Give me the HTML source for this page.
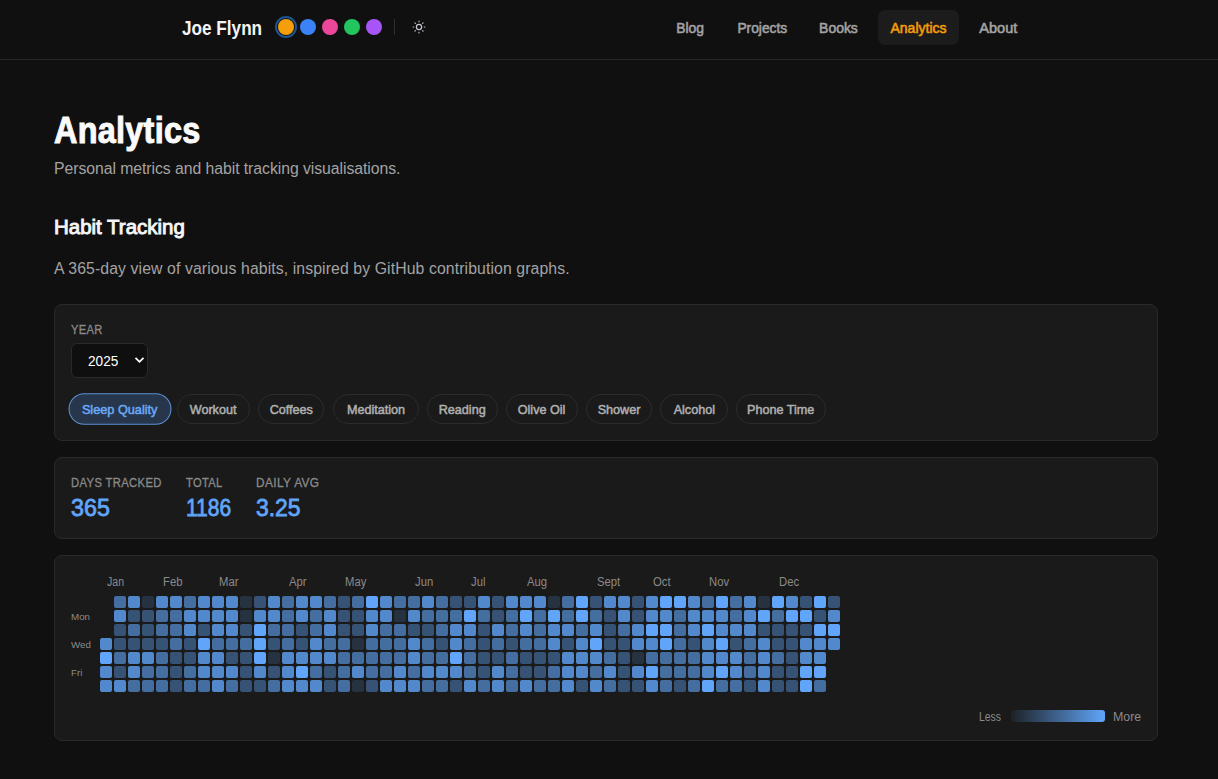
<!DOCTYPE html>
<html><head><meta charset="utf-8"><title>Analytics - Joe Flynn</title>
<style>
*{box-sizing:border-box;margin:0;padding:0}
html,body{width:1218px;height:779px;overflow:hidden;background:#101010;font-family:"Liberation Sans",sans-serif;color:#e5e5e5}
.abs{position:absolute;white-space:nowrap;line-height:1}
.sx{display:inline-block;transform-origin:0 50%}
header{position:absolute;left:0;top:0;width:1218px;height:60px;border-bottom:1px solid #28282b;background:#101010}
.logo{left:182px;top:19px;font-size:19.5px;font-weight:700;color:#f5f5f5}
.dot{position:absolute;top:19px;width:16px;height:16px;border-radius:50%}
.dot.sel{box-shadow:0 0 0 1px #111,0 0 0 3px #1c5690}
.divider{position:absolute;left:394px;top:19px;width:1px;height:16px;background:#2e2e2e}
.sun{position:absolute;left:411px;top:19px;width:16px;height:16px}
.nav{position:absolute;top:10px;height:35px;padding-top:0.5px;border-radius:7px;font-size:14px;font-weight:400;-webkit-text-stroke:0.55px currentColor;color:#a3a3a3;text-align:center;line-height:35px}
.nav.act{background:#1c1c1c;color:#f59e0b}
h1{left:54px;top:113px;font-size:36px;font-weight:700;color:#fafafa}
.sub{left:54px;top:161px;font-size:15.8px;color:#a3a3a3;letter-spacing:-0.06px}
h2{left:54px;top:216px;font-size:19.5px;font-weight:700;color:#f5f5f5}
.desc{left:54px;top:261px;font-size:15.8px;color:#a3a3a3;letter-spacing:0.1px}
.card{position:absolute;left:54px;width:1104px;background:#1a1a1a;border:1px solid #2a2a2d;border-radius:8px}
.lbl{font-size:12.5px;color:#8a8a8a;letter-spacing:0.4px;-webkit-text-stroke:0.3px currentColor;text-transform:uppercase;transform-origin:0 0}
.select{position:absolute;left:16px;top:38px;width:77px;height:35px;background:#0f0f0f;border:1px solid #2a2a2a;border-radius:6px}
.pill{position:absolute;top:89px;height:30px;border:1px solid #2c2c2c;border-radius:15px;font-size:13px;font-weight:400;-webkit-text-stroke:0.5px currentColor;color:#b0b0b0;text-align:center;line-height:30px}
.pill span{display:inline-block;transform:scaleX(0.97)}
.pill.act span{transform:scaleX(0.93)}
.pill.act{background:#27364a;border-color:#5b91d3;color:#6aaaf8;transform:scale(1.05)}
.val{font-size:24px;font-weight:400;-webkit-text-stroke:0.8px currentColor;color:#60a5fa;transform-origin:0 0}
.c{position:absolute;width:12px;height:12px;border-radius:2px}
.l1{background:#263240}.l2{background:#365274}.l3{background:#446da0}.l4{background:#5289cd}.l5{background:#60a5fa}
.mo{position:absolute;top:19.5px;font-size:12px;color:#8a8a8a;line-height:1;transform:scaleX(0.88);transform-origin:0 0}
.day{position:absolute;left:16px;font-size:9.8px;color:#8a8a8a;line-height:1;margin-top:-0.4px}
</style></head>
<body>
<header>
  <div class="abs logo"><span class="sx" style="transform:scaleX(0.88)">Joe Flynn</span></div>
  <div class="dot sel" style="left:278px;background:#f59e0b"></div>
  <div class="dot" style="left:300px;background:#3b82f6"></div>
  <div class="dot" style="left:322px;background:#ec4899"></div>
  <div class="dot" style="left:344px;background:#22c55e"></div>
  <div class="dot" style="left:366px;background:#a855f7"></div>
  <div class="divider"></div>
  <svg class="sun" viewBox="0 0 16 16" fill="none" stroke="#c8c8d0" stroke-width="1.2" stroke-linecap="round">
    <circle cx="8" cy="8" r="2.6"/>
    <path d="M8 2v.7M8 13.3v.7M2.1 8h.7M13.2 8h.7M3.9 3.9l.5.5M11.6 11.6l.5.5M3.9 12.1l.5-.5M11.6 4.4l.5-.5" stroke="#b8b8c4"/>
  </svg>
  <div class="nav" style="left:664px;width:52px"><span class="sx" style="transform:scaleX(0.99);transform-origin:50% 50%">Blog</span></div>
  <div class="nav" style="left:725px;width:74px"><span class="sx" style="transform:scaleX(0.985);transform-origin:50% 50%">Projects</span></div>
  <div class="nav" style="left:807px;width:62px"><span class="sx" style="transform:scaleX(0.995);transform-origin:50% 50%">Books</span></div>
  <div class="nav act" style="left:878px;width:81px"><span class="sx" style="transform:scaleX(1.0);transform-origin:50% 50%">Analytics</span></div>
  <div class="nav" style="left:967px;width:63px"><span class="sx" style="transform:scaleX(1.035);transform-origin:50% 50%">About</span></div>
</header>

<div class="abs" style="left:54px;top:113px;font-size:36px;font-weight:700;color:#fafafa;-webkit-text-stroke:1px #fafafa"><span class="sx" style="transform:scaleX(0.9);letter-spacing:0.3px">Analytics</span></div>
<div class="abs sub">Personal metrics and habit tracking visualisations.</div>
<div class="abs" style="left:54px;top:217.5px;font-size:19.5px;font-weight:400;-webkit-text-stroke:0.9px #f5f5f5;color:#f5f5f5"><span class="sx" style="transform:scaleX(1.05)">Habit Tracking</span></div>
<div class="abs desc">A 365-day view of various habits, inspired by GitHub contribution graphs.</div>

<div class="card" style="top:304px;height:137px">
  <div class="abs lbl" style="left:16px;top:19px;transform:scaleX(0.89)">Year</div>
  <div class="select">
    <div class="abs" style="left:16px;top:10.3px;font-size:14.2px;color:#ffffff;transform:scaleX(0.96);transform-origin:0 0">2025</div>
    <svg style="position:absolute;left:61.5px;top:12px" width="11" height="8" viewBox="0 0 11 8"><path d="M1.5 1.8l4 4 4-4" fill="none" stroke="#fff" stroke-width="1.8"/></svg>
  </div>
  <div class="pill act" style="left:16px;width:98px"><span>Sleep Quality</span></div>
  <div class="pill" style="left:122px;width:73px"><span>Workout</span></div>
  <div class="pill" style="left:203px;width:66px"><span>Coffees</span></div>
  <div class="pill" style="left:278px;width:86px"><span>Meditation</span></div>
  <div class="pill" style="left:372px;width:71px"><span>Reading</span></div>
  <div class="pill" style="left:451px;width:72px"><span>Olive Oil</span></div>
  <div class="pill" style="left:531px;width:66px"><span>Shower</span></div>
  <div class="pill" style="left:605px;width:68px"><span>Alcohol</span></div>
  <div class="pill" style="left:681px;width:90px"><span>Phone Time</span></div>
</div>

<div class="card" style="top:457px;height:82px">
  <div class="abs lbl" style="left:16px;top:19px;transform:scaleX(0.9)">Days Tracked</div>
  <div class="abs val" style="left:16px;top:38px;transform:scaleX(0.97)">365</div>
  <div class="abs lbl" style="left:131px;top:19px;transform:scaleX(0.89)">Total</div>
  <div class="abs val" style="left:131px;top:38px;transform:scaleX(0.875)">1186</div>
  <div class="abs lbl" style="left:201px;top:19px;transform:scaleX(0.95)">Daily Avg</div>
  <div class="abs val" style="left:201px;top:38px;transform:scaleX(0.955)">3.25</div>
</div>

<div class="card" style="top:555px;height:186px">
  <span class="mo" style="left:52px;transform:scaleX(0.88)">Jan</span><span class="mo" style="left:108px;transform:scaleX(0.94)">Feb</span><span class="mo" style="left:164px;transform:scaleX(0.94)">Mar</span><span class="mo" style="left:234px;transform:scaleX(0.94)">Apr</span><span class="mo" style="left:290px;transform:scaleX(0.94)">May</span><span class="mo" style="left:360px;transform:scaleX(0.94)">Jun</span><span class="mo" style="left:416px;transform:scaleX(0.94)">Jul</span><span class="mo" style="left:472px;transform:scaleX(0.94)">Aug</span><span class="mo" style="left:542px;transform:scaleX(0.94)">Sept</span><span class="mo" style="left:598px;transform:scaleX(0.94)">Oct</span><span class="mo" style="left:654px;transform:scaleX(0.94)">Nov</span><span class="mo" style="left:724px;transform:scaleX(0.94)">Dec</span>
  <div class="day" style="top:56px">Mon</div>
  <div class="day" style="top:84px">Wed</div>
  <div class="day" style="top:112px">Fri</div>
  <i class="c l4" style="left:45px;top:82px"></i>
<i class="c l5" style="left:45px;top:96px"></i>
<i class="c l4" style="left:45px;top:110px"></i>
<i class="c l4" style="left:45px;top:124px"></i>
<i class="c l3" style="left:59px;top:40px"></i>
<i class="c l4" style="left:59px;top:54px"></i>
<i class="c l2" style="left:59px;top:68px"></i>
<i class="c l2" style="left:59px;top:82px"></i>
<i class="c l3" style="left:59px;top:96px"></i>
<i class="c l2" style="left:59px;top:110px"></i>
<i class="c l4" style="left:59px;top:124px"></i>
<i class="c l4" style="left:73px;top:40px"></i>
<i class="c l2" style="left:73px;top:54px"></i>
<i class="c l3" style="left:73px;top:68px"></i>
<i class="c l2" style="left:73px;top:82px"></i>
<i class="c l4" style="left:73px;top:96px"></i>
<i class="c l4" style="left:73px;top:110px"></i>
<i class="c l3" style="left:73px;top:124px"></i>
<i class="c l1" style="left:87px;top:40px"></i>
<i class="c l2" style="left:87px;top:54px"></i>
<i class="c l2" style="left:87px;top:68px"></i>
<i class="c l2" style="left:87px;top:82px"></i>
<i class="c l4" style="left:87px;top:96px"></i>
<i class="c l3" style="left:87px;top:110px"></i>
<i class="c l3" style="left:87px;top:124px"></i>
<i class="c l4" style="left:101px;top:40px"></i>
<i class="c l3" style="left:101px;top:54px"></i>
<i class="c l3" style="left:101px;top:68px"></i>
<i class="c l2" style="left:101px;top:82px"></i>
<i class="c l3" style="left:101px;top:96px"></i>
<i class="c l3" style="left:101px;top:110px"></i>
<i class="c l3" style="left:101px;top:124px"></i>
<i class="c l4" style="left:115px;top:40px"></i>
<i class="c l3" style="left:115px;top:54px"></i>
<i class="c l3" style="left:115px;top:68px"></i>
<i class="c l3" style="left:115px;top:82px"></i>
<i class="c l2" style="left:115px;top:96px"></i>
<i class="c l2" style="left:115px;top:110px"></i>
<i class="c l2" style="left:115px;top:124px"></i>
<i class="c l3" style="left:129px;top:40px"></i>
<i class="c l4" style="left:129px;top:54px"></i>
<i class="c l4" style="left:129px;top:68px"></i>
<i class="c l2" style="left:129px;top:82px"></i>
<i class="c l2" style="left:129px;top:96px"></i>
<i class="c l3" style="left:129px;top:110px"></i>
<i class="c l3" style="left:129px;top:124px"></i>
<i class="c l4" style="left:143px;top:40px"></i>
<i class="c l4" style="left:143px;top:54px"></i>
<i class="c l2" style="left:143px;top:68px"></i>
<i class="c l5" style="left:143px;top:82px"></i>
<i class="c l4" style="left:143px;top:96px"></i>
<i class="c l4" style="left:143px;top:110px"></i>
<i class="c l3" style="left:143px;top:124px"></i>
<i class="c l4" style="left:157px;top:40px"></i>
<i class="c l4" style="left:157px;top:54px"></i>
<i class="c l4" style="left:157px;top:68px"></i>
<i class="c l3" style="left:157px;top:82px"></i>
<i class="c l4" style="left:157px;top:96px"></i>
<i class="c l4" style="left:157px;top:110px"></i>
<i class="c l4" style="left:157px;top:124px"></i>
<i class="c l4" style="left:171px;top:40px"></i>
<i class="c l4" style="left:171px;top:54px"></i>
<i class="c l4" style="left:171px;top:68px"></i>
<i class="c l3" style="left:171px;top:82px"></i>
<i class="c l2" style="left:171px;top:96px"></i>
<i class="c l4" style="left:171px;top:110px"></i>
<i class="c l3" style="left:171px;top:124px"></i>
<i class="c l1" style="left:185px;top:40px"></i>
<i class="c l1" style="left:185px;top:54px"></i>
<i class="c l2" style="left:185px;top:68px"></i>
<i class="c l3" style="left:185px;top:82px"></i>
<i class="c l2" style="left:185px;top:96px"></i>
<i class="c l2" style="left:185px;top:110px"></i>
<i class="c l2" style="left:185px;top:124px"></i>
<i class="c l2" style="left:199px;top:40px"></i>
<i class="c l4" style="left:199px;top:54px"></i>
<i class="c l5" style="left:199px;top:68px"></i>
<i class="c l5" style="left:199px;top:82px"></i>
<i class="c l5" style="left:199px;top:96px"></i>
<i class="c l4" style="left:199px;top:110px"></i>
<i class="c l2" style="left:199px;top:124px"></i>
<i class="c l4" style="left:213px;top:40px"></i>
<i class="c l4" style="left:213px;top:54px"></i>
<i class="c l3" style="left:213px;top:68px"></i>
<i class="c l2" style="left:213px;top:82px"></i>
<i class="c l1" style="left:213px;top:96px"></i>
<i class="c l2" style="left:213px;top:110px"></i>
<i class="c l3" style="left:213px;top:124px"></i>
<i class="c l3" style="left:227px;top:40px"></i>
<i class="c l3" style="left:227px;top:54px"></i>
<i class="c l3" style="left:227px;top:68px"></i>
<i class="c l3" style="left:227px;top:82px"></i>
<i class="c l4" style="left:227px;top:96px"></i>
<i class="c l4" style="left:227px;top:110px"></i>
<i class="c l4" style="left:227px;top:124px"></i>
<i class="c l4" style="left:241px;top:40px"></i>
<i class="c l4" style="left:241px;top:54px"></i>
<i class="c l2" style="left:241px;top:68px"></i>
<i class="c l2" style="left:241px;top:82px"></i>
<i class="c l4" style="left:241px;top:96px"></i>
<i class="c l5" style="left:241px;top:110px"></i>
<i class="c l4" style="left:241px;top:124px"></i>
<i class="c l4" style="left:255px;top:40px"></i>
<i class="c l3" style="left:255px;top:54px"></i>
<i class="c l3" style="left:255px;top:68px"></i>
<i class="c l4" style="left:255px;top:82px"></i>
<i class="c l4" style="left:255px;top:96px"></i>
<i class="c l3" style="left:255px;top:110px"></i>
<i class="c l4" style="left:255px;top:124px"></i>
<i class="c l3" style="left:269px;top:40px"></i>
<i class="c l4" style="left:269px;top:54px"></i>
<i class="c l4" style="left:269px;top:68px"></i>
<i class="c l3" style="left:269px;top:82px"></i>
<i class="c l4" style="left:269px;top:96px"></i>
<i class="c l2" style="left:269px;top:110px"></i>
<i class="c l2" style="left:269px;top:124px"></i>
<i class="c l2" style="left:283px;top:40px"></i>
<i class="c l2" style="left:283px;top:54px"></i>
<i class="c l2" style="left:283px;top:68px"></i>
<i class="c l3" style="left:283px;top:82px"></i>
<i class="c l3" style="left:283px;top:96px"></i>
<i class="c l3" style="left:283px;top:110px"></i>
<i class="c l3" style="left:283px;top:124px"></i>
<i class="c l3" style="left:297px;top:40px"></i>
<i class="c l2" style="left:297px;top:54px"></i>
<i class="c l2" style="left:297px;top:68px"></i>
<i class="c l1" style="left:297px;top:82px"></i>
<i class="c l3" style="left:297px;top:96px"></i>
<i class="c l4" style="left:297px;top:110px"></i>
<i class="c l1" style="left:297px;top:124px"></i>
<i class="c l5" style="left:311px;top:40px"></i>
<i class="c l4" style="left:311px;top:54px"></i>
<i class="c l4" style="left:311px;top:68px"></i>
<i class="c l3" style="left:311px;top:82px"></i>
<i class="c l3" style="left:311px;top:96px"></i>
<i class="c l3" style="left:311px;top:110px"></i>
<i class="c l2" style="left:311px;top:124px"></i>
<i class="c l4" style="left:325px;top:40px"></i>
<i class="c l4" style="left:325px;top:54px"></i>
<i class="c l3" style="left:325px;top:68px"></i>
<i class="c l3" style="left:325px;top:82px"></i>
<i class="c l3" style="left:325px;top:96px"></i>
<i class="c l3" style="left:325px;top:110px"></i>
<i class="c l4" style="left:325px;top:124px"></i>
<i class="c l3" style="left:339px;top:40px"></i>
<i class="c l1" style="left:339px;top:54px"></i>
<i class="c l3" style="left:339px;top:68px"></i>
<i class="c l3" style="left:339px;top:82px"></i>
<i class="c l3" style="left:339px;top:96px"></i>
<i class="c l4" style="left:339px;top:110px"></i>
<i class="c l4" style="left:339px;top:124px"></i>
<i class="c l3" style="left:353px;top:40px"></i>
<i class="c l4" style="left:353px;top:54px"></i>
<i class="c l2" style="left:353px;top:68px"></i>
<i class="c l4" style="left:353px;top:82px"></i>
<i class="c l4" style="left:353px;top:96px"></i>
<i class="c l3" style="left:353px;top:110px"></i>
<i class="c l4" style="left:353px;top:124px"></i>
<i class="c l4" style="left:367px;top:40px"></i>
<i class="c l3" style="left:367px;top:54px"></i>
<i class="c l2" style="left:367px;top:68px"></i>
<i class="c l3" style="left:367px;top:82px"></i>
<i class="c l3" style="left:367px;top:96px"></i>
<i class="c l4" style="left:367px;top:110px"></i>
<i class="c l3" style="left:367px;top:124px"></i>
<i class="c l3" style="left:381px;top:40px"></i>
<i class="c l3" style="left:381px;top:54px"></i>
<i class="c l3" style="left:381px;top:68px"></i>
<i class="c l2" style="left:381px;top:82px"></i>
<i class="c l3" style="left:381px;top:96px"></i>
<i class="c l4" style="left:381px;top:110px"></i>
<i class="c l3" style="left:381px;top:124px"></i>
<i class="c l2" style="left:395px;top:40px"></i>
<i class="c l3" style="left:395px;top:54px"></i>
<i class="c l4" style="left:395px;top:68px"></i>
<i class="c l4" style="left:395px;top:82px"></i>
<i class="c l5" style="left:395px;top:96px"></i>
<i class="c l4" style="left:395px;top:110px"></i>
<i class="c l2" style="left:395px;top:124px"></i>
<i class="c l2" style="left:409px;top:40px"></i>
<i class="c l5" style="left:409px;top:54px"></i>
<i class="c l4" style="left:409px;top:68px"></i>
<i class="c l3" style="left:409px;top:82px"></i>
<i class="c l3" style="left:409px;top:96px"></i>
<i class="c l3" style="left:409px;top:110px"></i>
<i class="c l4" style="left:409px;top:124px"></i>
<i class="c l4" style="left:423px;top:40px"></i>
<i class="c l3" style="left:423px;top:54px"></i>
<i class="c l2" style="left:423px;top:68px"></i>
<i class="c l2" style="left:423px;top:82px"></i>
<i class="c l2" style="left:423px;top:96px"></i>
<i class="c l2" style="left:423px;top:110px"></i>
<i class="c l3" style="left:423px;top:124px"></i>
<i class="c l2" style="left:437px;top:40px"></i>
<i class="c l2" style="left:437px;top:54px"></i>
<i class="c l4" style="left:437px;top:68px"></i>
<i class="c l3" style="left:437px;top:82px"></i>
<i class="c l2" style="left:437px;top:96px"></i>
<i class="c l4" style="left:437px;top:110px"></i>
<i class="c l4" style="left:437px;top:124px"></i>
<i class="c l4" style="left:451px;top:40px"></i>
<i class="c l3" style="left:451px;top:54px"></i>
<i class="c l3" style="left:451px;top:68px"></i>
<i class="c l2" style="left:451px;top:82px"></i>
<i class="c l3" style="left:451px;top:96px"></i>
<i class="c l3" style="left:451px;top:110px"></i>
<i class="c l3" style="left:451px;top:124px"></i>
<i class="c l4" style="left:465px;top:40px"></i>
<i class="c l5" style="left:465px;top:54px"></i>
<i class="c l4" style="left:465px;top:68px"></i>
<i class="c l3" style="left:465px;top:82px"></i>
<i class="c l2" style="left:465px;top:96px"></i>
<i class="c l2" style="left:465px;top:110px"></i>
<i class="c l4" style="left:465px;top:124px"></i>
<i class="c l4" style="left:479px;top:40px"></i>
<i class="c l3" style="left:479px;top:54px"></i>
<i class="c l3" style="left:479px;top:68px"></i>
<i class="c l3" style="left:479px;top:82px"></i>
<i class="c l2" style="left:479px;top:96px"></i>
<i class="c l2" style="left:479px;top:110px"></i>
<i class="c l3" style="left:479px;top:124px"></i>
<i class="c l1" style="left:493px;top:40px"></i>
<i class="c l5" style="left:493px;top:54px"></i>
<i class="c l4" style="left:493px;top:68px"></i>
<i class="c l4" style="left:493px;top:82px"></i>
<i class="c l2" style="left:493px;top:96px"></i>
<i class="c l3" style="left:493px;top:110px"></i>
<i class="c l3" style="left:493px;top:124px"></i>
<i class="c l3" style="left:507px;top:40px"></i>
<i class="c l3" style="left:507px;top:54px"></i>
<i class="c l4" style="left:507px;top:68px"></i>
<i class="c l2" style="left:507px;top:82px"></i>
<i class="c l4" style="left:507px;top:96px"></i>
<i class="c l4" style="left:507px;top:110px"></i>
<i class="c l4" style="left:507px;top:124px"></i>
<i class="c l5" style="left:521px;top:40px"></i>
<i class="c l5" style="left:521px;top:54px"></i>
<i class="c l3" style="left:521px;top:68px"></i>
<i class="c l4" style="left:521px;top:82px"></i>
<i class="c l4" style="left:521px;top:96px"></i>
<i class="c l4" style="left:521px;top:110px"></i>
<i class="c l2" style="left:521px;top:124px"></i>
<i class="c l2" style="left:535px;top:40px"></i>
<i class="c l3" style="left:535px;top:54px"></i>
<i class="c l4" style="left:535px;top:68px"></i>
<i class="c l5" style="left:535px;top:82px"></i>
<i class="c l4" style="left:535px;top:96px"></i>
<i class="c l3" style="left:535px;top:110px"></i>
<i class="c l4" style="left:535px;top:124px"></i>
<i class="c l4" style="left:549px;top:40px"></i>
<i class="c l2" style="left:549px;top:54px"></i>
<i class="c l2" style="left:549px;top:68px"></i>
<i class="c l2" style="left:549px;top:82px"></i>
<i class="c l3" style="left:549px;top:96px"></i>
<i class="c l4" style="left:549px;top:110px"></i>
<i class="c l3" style="left:549px;top:124px"></i>
<i class="c l4" style="left:563px;top:40px"></i>
<i class="c l4" style="left:563px;top:54px"></i>
<i class="c l3" style="left:563px;top:68px"></i>
<i class="c l2" style="left:563px;top:82px"></i>
<i class="c l2" style="left:563px;top:96px"></i>
<i class="c l2" style="left:563px;top:110px"></i>
<i class="c l2" style="left:563px;top:124px"></i>
<i class="c l2" style="left:577px;top:40px"></i>
<i class="c l2" style="left:577px;top:54px"></i>
<i class="c l4" style="left:577px;top:68px"></i>
<i class="c l4" style="left:577px;top:82px"></i>
<i class="c l1" style="left:577px;top:96px"></i>
<i class="c l4" style="left:577px;top:110px"></i>
<i class="c l2" style="left:577px;top:124px"></i>
<i class="c l4" style="left:591px;top:40px"></i>
<i class="c l4" style="left:591px;top:54px"></i>
<i class="c l5" style="left:591px;top:68px"></i>
<i class="c l4" style="left:591px;top:82px"></i>
<i class="c l3" style="left:591px;top:96px"></i>
<i class="c l5" style="left:591px;top:110px"></i>
<i class="c l4" style="left:591px;top:124px"></i>
<i class="c l5" style="left:605px;top:40px"></i>
<i class="c l4" style="left:605px;top:54px"></i>
<i class="c l5" style="left:605px;top:68px"></i>
<i class="c l5" style="left:605px;top:82px"></i>
<i class="c l3" style="left:605px;top:96px"></i>
<i class="c l3" style="left:605px;top:110px"></i>
<i class="c l3" style="left:605px;top:124px"></i>
<i class="c l5" style="left:619px;top:40px"></i>
<i class="c l3" style="left:619px;top:54px"></i>
<i class="c l3" style="left:619px;top:68px"></i>
<i class="c l3" style="left:619px;top:82px"></i>
<i class="c l3" style="left:619px;top:96px"></i>
<i class="c l3" style="left:619px;top:110px"></i>
<i class="c l2" style="left:619px;top:124px"></i>
<i class="c l4" style="left:633px;top:40px"></i>
<i class="c l4" style="left:633px;top:54px"></i>
<i class="c l4" style="left:633px;top:68px"></i>
<i class="c l2" style="left:633px;top:82px"></i>
<i class="c l3" style="left:633px;top:96px"></i>
<i class="c l3" style="left:633px;top:110px"></i>
<i class="c l3" style="left:633px;top:124px"></i>
<i class="c l3" style="left:647px;top:40px"></i>
<i class="c l4" style="left:647px;top:54px"></i>
<i class="c l5" style="left:647px;top:68px"></i>
<i class="c l4" style="left:647px;top:82px"></i>
<i class="c l4" style="left:647px;top:96px"></i>
<i class="c l4" style="left:647px;top:110px"></i>
<i class="c l5" style="left:647px;top:124px"></i>
<i class="c l5" style="left:661px;top:40px"></i>
<i class="c l4" style="left:661px;top:54px"></i>
<i class="c l4" style="left:661px;top:68px"></i>
<i class="c l5" style="left:661px;top:82px"></i>
<i class="c l4" style="left:661px;top:96px"></i>
<i class="c l5" style="left:661px;top:110px"></i>
<i class="c l3" style="left:661px;top:124px"></i>
<i class="c l3" style="left:675px;top:40px"></i>
<i class="c l3" style="left:675px;top:54px"></i>
<i class="c l4" style="left:675px;top:68px"></i>
<i class="c l2" style="left:675px;top:82px"></i>
<i class="c l4" style="left:675px;top:96px"></i>
<i class="c l4" style="left:675px;top:110px"></i>
<i class="c l3" style="left:675px;top:124px"></i>
<i class="c l4" style="left:689px;top:40px"></i>
<i class="c l4" style="left:689px;top:54px"></i>
<i class="c l4" style="left:689px;top:68px"></i>
<i class="c l3" style="left:689px;top:82px"></i>
<i class="c l3" style="left:689px;top:96px"></i>
<i class="c l3" style="left:689px;top:110px"></i>
<i class="c l2" style="left:689px;top:124px"></i>
<i class="c l1" style="left:703px;top:40px"></i>
<i class="c l5" style="left:703px;top:54px"></i>
<i class="c l2" style="left:703px;top:68px"></i>
<i class="c l4" style="left:703px;top:82px"></i>
<i class="c l4" style="left:703px;top:96px"></i>
<i class="c l4" style="left:703px;top:110px"></i>
<i class="c l4" style="left:703px;top:124px"></i>
<i class="c l5" style="left:717px;top:40px"></i>
<i class="c l3" style="left:717px;top:54px"></i>
<i class="c l2" style="left:717px;top:68px"></i>
<i class="c l2" style="left:717px;top:82px"></i>
<i class="c l3" style="left:717px;top:96px"></i>
<i class="c l2" style="left:717px;top:110px"></i>
<i class="c l2" style="left:717px;top:124px"></i>
<i class="c l4" style="left:731px;top:40px"></i>
<i class="c l5" style="left:731px;top:54px"></i>
<i class="c l2" style="left:731px;top:68px"></i>
<i class="c l2" style="left:731px;top:82px"></i>
<i class="c l2" style="left:731px;top:96px"></i>
<i class="c l2" style="left:731px;top:110px"></i>
<i class="c l2" style="left:731px;top:124px"></i>
<i class="c l2" style="left:745px;top:40px"></i>
<i class="c l5" style="left:745px;top:54px"></i>
<i class="c l2" style="left:745px;top:68px"></i>
<i class="c l4" style="left:745px;top:82px"></i>
<i class="c l4" style="left:745px;top:96px"></i>
<i class="c l5" style="left:745px;top:110px"></i>
<i class="c l5" style="left:745px;top:124px"></i>
<i class="c l5" style="left:759px;top:40px"></i>
<i class="c l2" style="left:759px;top:54px"></i>
<i class="c l5" style="left:759px;top:68px"></i>
<i class="c l4" style="left:759px;top:82px"></i>
<i class="c l4" style="left:759px;top:96px"></i>
<i class="c l5" style="left:759px;top:110px"></i>
<i class="c l3" style="left:759px;top:124px"></i>
<i class="c l2" style="left:773px;top:40px"></i>
<i class="c l4" style="left:773px;top:54px"></i>
<i class="c l5" style="left:773px;top:68px"></i>
<i class="c l4" style="left:773px;top:82px"></i>
  <div class="abs" style="left:924px;top:155px;font-size:12px;color:#8a8a8a;transform:scaleX(0.87);transform-origin:0 0">Less</div>
  <div style="position:absolute;left:956px;top:154px;width:94px;height:12px;border-radius:3px;background:linear-gradient(to right,rgba(96,165,250,0.05),#60a5fa)"></div>
  <div class="abs" style="left:1058px;top:155px;font-size:12px;color:#8a8a8a;transform:scaleX(1.03);transform-origin:0 0">More</div>
</div>
</body></html>
